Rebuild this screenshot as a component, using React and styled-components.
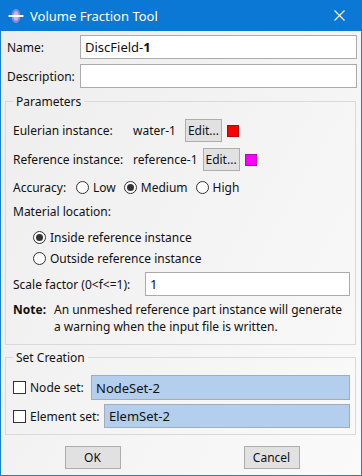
import React from 'react'
import styled, { createGlobalStyle } from 'styled-components'

const Global = createGlobalStyle`
html, body {
  margin: 0;
  padding: 0;
  background: #ffffff;
}
* {
  box-sizing: border-box;
}
`

const Win = styled.div`
width: 362px;
height: 476px;
border: 1px solid #1d7fd4;
border-top: none;
display: flex;
flex-direction: column;
background: linear-gradient(120deg, #ededed 0%, #f4f4f4 55%, #fafafa 100%);
font-family: "Noto Sans", "Liberation Sans", sans-serif;
font-size: 12px;
color: #111;
`

const TitleBar = styled.div`
height: 31px;
margin: 0 -1px;
background: #0a78d4;
color: #fff;
display: flex;
align-items: center;
padding: 0 0 0 8px;
font-size: 13px;
`

const TitleText = styled.span`
margin-left: 6px;
flex: 1;
`

const CloseBtn = styled.div`
width: 46px;
height: 31px;
display: flex;
align-items: center;
justify-content: center;
`

const Body = styled.div`
flex: 1;
display: flex;
flex-direction: column;
padding: 4px 4px 0 6px;
`

const FieldRow = styled.div`
display: flex;
align-items: center;
height: 24px;
margin-top: ${p => p.$mt || 0}px;
`

const Label = styled.span`
width: ${p => p.$w ? p.$w + 'px' : 'auto'};
flex-shrink: 0;
white-space: nowrap;
`

const TextInput = styled.div`
flex: 1;
height: ${p => p.$h || 24}px;
border: 1px solid #ababab;
background: ${p => p.$sel ? '#b4cfee' : '#fff'};
border-color: ${p => p.$sel ? '#a3adb8' : '#ababab'};
display: flex;
align-items: center;
padding: 0 4px;
font-size: 13px;
white-space: nowrap;
`

const Group = styled.fieldset`
margin: ${p => p.$mt}px 1px 0 -2px;
padding: 3px 5px ${p => p.$pb}px 7px;
border: 1px solid #d9d9d9;
min-width: 0;
`

const Legend = styled.legend`
padding: 0 3px;
margin-left: 0;
font-size: 12px;
`

const Row = styled.div`
display: flex;
align-items: center;
height: ${p => p.$h || 20}px;
margin-top: ${p => p.$mt || 0}px;
padding-left: ${p => p.$indent || 0}px;
white-space: nowrap;
`

const Value = styled.span`
margin-right: ${p => p.$gap}px;
`

const Button = styled.div`
width: ${p => p.$w || 37}px;
height: 23px;
background: #e1e1e1;
border: 1px solid #adadad;
display: flex;
align-items: center;
justify-content: center;
font-size: 12px;
`

const Swatch = styled.span`
width: 12px;
height: 12px;
margin-left: 5px;
background: ${p => p.$c};
border: 1px solid rgba(0, 0, 0, 0.25);
`

const Radio = styled.span`
width: 13px;
height: 13px;
border-radius: 50%;
border: 1px solid #333;
background: #fff;
display: inline-flex;
align-items: center;
justify-content: center;
margin: 0 4px 0 ${p => p.$ml || 0}px;
flex-shrink: 0;
&::after {
  content: "";
  width: 7px;
  height: 7px;
  border-radius: 50%;
  background: ${p => p.$on ? '#333' : 'transparent'};
}
`

const Check = styled.span`
width: 13px;
height: 13px;
border: 1px solid #333;
background: #fff;
margin-right: 4px;
flex-shrink: 0;
`

const Note = styled.div`
display: grid;
grid-template-columns: 41px 1fr;
margin-top: 5px;
line-height: 17px;
b {
  font-weight: 700;
}
`

const Footer = styled.div`
display: flex;
justify-content: center;
gap: 123px;
margin-top: 11px;
`

const TitleIcon = () => (
  <svg width="16" height="16" viewBox="0 0 16 16">
    <ellipse cx="8" cy="8" rx="4.5" ry="7" fill="#a38fcf" opacity="0.85" />
    <ellipse cx="8" cy="8" rx="2.5" ry="4.5" fill="#c9b8ea" />
    <rect x="0.5" y="7" width="15" height="2" fill="#fff" />
  </svg>
)

const CloseIcon = () => (
  <svg width="11" height="11" viewBox="0 0 11 11">
    <path d="M0.5 0.5 L10.5 10.5 M10.5 0.5 L0.5 10.5" stroke="#fff" strokeWidth="1.1" />
  </svg>
)

export default function App() {
  return (
    <>
      <Global />
      <Win>
        <TitleBar>
          <TitleIcon />
          <TitleText>Volume Fraction Tool</TitleText>
          <CloseBtn><CloseIcon /></CloseBtn>
        </TitleBar>
        <Body>
          <FieldRow>
            <Label $w={73}>Name:</Label>
            <TextInput>DiscField-<b>1</b></TextInput>
          </FieldRow>
          <FieldRow $mt={5}>
            <Label $w={73}>Description:</Label>
            <TextInput />
          </FieldRow>

          <Group $mt={5} $pb={9}>
            <Legend>Parameters</Legend>
            <Row $h={23} $mt={6}>
              <Label $w={120}>Eulerian instance:</Label>
              <Value $gap={9}>water-1</Value>
              <Button>Edit...</Button>
              <Swatch $c="#ff0000" />
            </Row>
            <Row $h={23} $mt={6}>
              <Label $w={120}>Reference instance:</Label>
              <Value $gap={5}>reference-1</Value>
              <Button>Edit...</Button>
              <Swatch $c="#ff00ff" />
            </Row>
            <Row $mt={6}>
              <Label $w={63}>Accuracy:</Label>
              <Radio />Low
              <Radio $on $ml={8} />Medium
              <Radio $ml={8} />High
            </Row>
            <Row $mt={4}>
              <Label>Material location:</Label>
            </Row>
            <Row $mt={6} $indent={20}>
              <Radio $on />Inside reference instance
            </Row>
            <Row $mt={1} $indent={20}>
              <Radio />Outside reference instance
            </Row>
            <Row $h={24} $mt={4}>
              <Label $w={132}>Scale factor (0&lt;f&lt;=1):</Label>
              <TextInput>1</TextInput>
            </Row>
            <Note>
              <b>Note:</b>
              <span>An unmeshed reference part instance will generate a warning when the input file is written.</span>
            </Note>
          </Group>

          <Group $mt={4} $pb={6}>
            <Legend>Set Creation</Legend>
            <Row $h={25} $mt={6}>
              <Check />
              <Label $w={61}>Node set:</Label>
              <TextInput $sel $h={25}>NodeSet-2</TextInput>
            </Row>
            <Row $h={24} $mt={4}>
              <Check />
              <Label $w={74}>Element set:</Label>
              <TextInput $sel $h={24}>ElemSet-2</TextInput>
            </Row>
          </Group>

          <Footer>
            <Button $w={56}>OK</Button>
            <Button $w={56}>Cancel</Button>
          </Footer>
        </Body>
      </Win>
    </>
  )
}
